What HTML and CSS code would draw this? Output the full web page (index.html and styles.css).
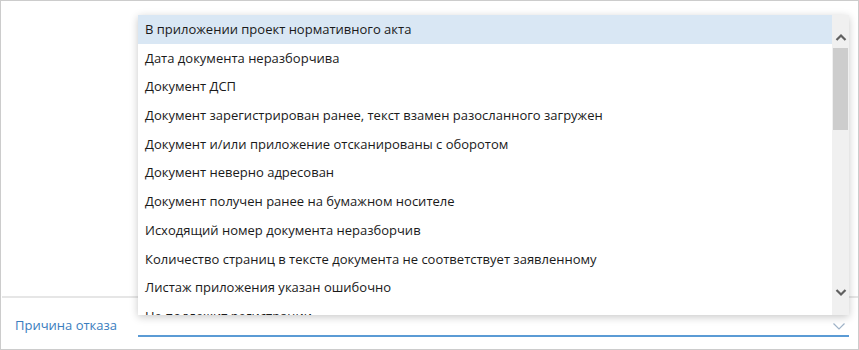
FILE: index.html
```html
<!DOCTYPE html>
<html lang="ru">
<head>
    <meta charset="UTF-8">
    <title>Причина отказа</title>
    <link rel="stylesheet" href="styles.css">
</head>
<body>
    <div class="frame">
        <div class="blank"></div>
        <div class="field">
            <label class="field-label">Причина отказа</label>
            <div class="select">
                <svg class="select-arrow" width="12" height="7" viewBox="0 0 12 7">
                    <path d="M0.5 0.5 L6 6 L11.5 0.5" fill="none" stroke="#9fb3c8" stroke-width="1.2"/>
                </svg>
            </div>
        </div>

        <!-- Dropdown list -->
        <div class="popup">
            <ul class="options">
                <li class="option active">В приложении проект нормативного акта</li>
                <li class="option">Дата документа неразборчива</li>
                <li class="option">Документ ДСП</li>
                <li class="option">Документ зарегистрирован ранее, текст взамен разосланного загружен</li>
                <li class="option">Документ и/или приложение отсканированы с оборотом</li>
                <li class="option">Документ неверно адресован</li>
                <li class="option">Документ получен ранее на бумажном носителе</li>
                <li class="option">Исходящий номер документа неразборчив</li>
                <li class="option">Количество страниц в тексте документа не соответствует заявленному</li>
                <li class="option">Листаж приложения указан ошибочно</li>
                <li class="option">Не подлежит регистрации</li>
            </ul>
            <div class="scrollbar">
                <svg class="scroll-btn" width="16" height="16" viewBox="0 0 16 16">
                    <path d="M3.5 10 L8 5.5 L12.5 10" fill="none" stroke="#606060" stroke-width="2.2"/>
                </svg>
                <div class="track"><div class="thumb"></div></div>
                <svg class="scroll-btn" width="16" height="16" viewBox="0 0 16 16">
                    <path d="M3.5 6 L8 10.5 L12.5 6" fill="none" stroke="#606060" stroke-width="2.2"/>
                </svg>
            </div>
        </div>
    </div>
</body>
</html>
```

FILE: styles.css
```css
body {
    margin: 0;
    padding: 0;
    background-color: #fff;
    font-family: "Open Sans", "Noto Sans", Arial, sans-serif;
}

.frame {
    position: relative;
    width: 859px;
    height: 350px;
    box-sizing: border-box;
    border: 1px solid #cccccc;
    display: flex;
    flex-direction: column;
}

.blank {
    height: 295px;
    border-bottom: 2px solid #e6e6e6;
    margin-left: 1px;
}

.field {
    display: flex;
    align-items: flex-start;
    flex: 1;
}

.field-label {
    width: 123px;
    padding: 18px 0 0 14px;
    font-size: 13px;
    color: #3a7dbe;
}

.select {
    width: 711px;
    height: 37px;
    border-bottom: 2px solid #5b9bd5;
    display: flex;
    justify-content: flex-end;
    align-items: flex-start;
}

.select-arrow {
    margin: 25px 4px 0 0;
}

/* Dropdown */
.popup {
    position: absolute;
    left: 137px;
    top: 14px;
    width: 711px;
    height: 300px;
    background: #fff;
    box-shadow: 0 2px 8px rgba(0, 0, 0, 0.22);
    display: flex;
    overflow: hidden;
}

.options {
    list-style: none;
    margin: 0;
    padding: 0;
    flex: 1;
}

.option {
    height: 28.7px;
    line-height: 28.7px;
    padding-left: 7px;
    font-size: 13px;
    color: #1a1a1a;
    white-space: nowrap;
}

.option.active {
    background-color: #d9e7f4;
}

.scrollbar {
    width: 17px;
    background-color: #f0f0f0;
    display: flex;
    flex-direction: column;
}

.scroll-btn {
    display: block;
    margin: 15px 0 2px 1px;
}

.scroll-btn:last-child {
    margin: 2px 0 15px 1px;
}

.track {
    flex: 1;
    padding: 0 1px;
}

.thumb {
    height: 82px;
    background-color: #cdcdcd;
}
```
